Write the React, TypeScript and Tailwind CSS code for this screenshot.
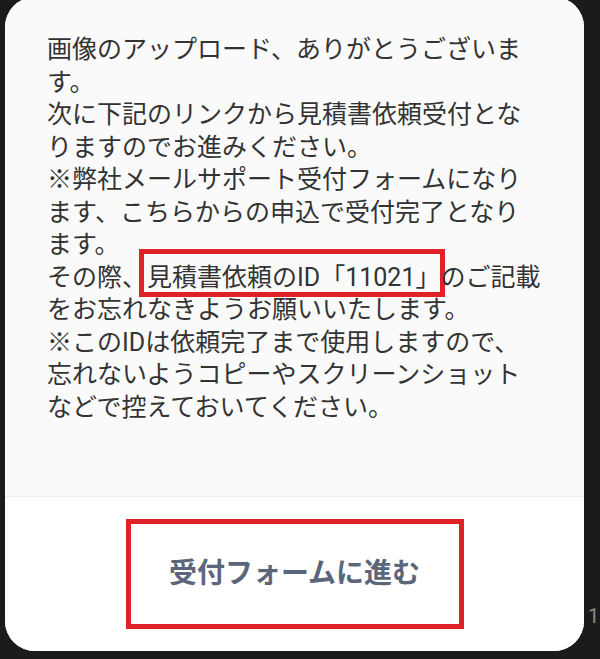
export default function App() {
  return (
    <div
      className="flex h-[659px] w-[600px] overflow-hidden bg-[#1b1b1b]"
      style={{ fontFamily: 'Roboto, "Noto Sans CJK JP", sans-serif' }}
    >
      {/* Dialog card */}
      <div className="ml-[5px] mt-[-3px] flex h-[654px] w-[579px] shrink-0 flex-col overflow-hidden rounded-[30px] bg-white">
        {/* Message */}
        <div className="h-[500px] border-b border-[#ececec] bg-[#fafafa] pl-[42px] pt-[37px]">
          <p className="w-[498px] whitespace-nowrap text-[25px] leading-[32.5px] text-[#333333]">
            画像のアップロード、ありがとうございま
            <br />
            す。
            <br />
            次に下記のリンクから見積書依頼受付とな
            <br />
            りますのでお進みください。
            <br />
            ※弊社メールサポート受付フォームになり
            <br />
            ます、こちらからの申込で受付完了となり
            <br />
            ます。
            <br />
            その際、
            <span className="ml-[-8px] mr-[-5px] border-[5px] border-[#e02128] pl-[3px] pt-[9px]">
              見積書依頼のID「11021」
            </span>
            のご記載
            <br />
            をお忘れなきようお願いいたします。
            <br />
            ※このIDは依頼完了まで使用しますので、
            <br />
            忘れないようコピーやスクリーンショット
            <br />
            などで控えておいてください。
          </p>
        </div>

        {/* Action */}
        <div className="flex flex-1 items-center justify-center bg-white">
          <button className="flex h-[110px] w-[338px] items-center justify-center border-[5px] border-[#e02128] text-[28px] font-bold text-[#5c667a]">
            受付フォームに進む
          </button>
        </div>
      </div>

      {/* Edge of the next item, cut off */}
      <div className="flex flex-1 items-end pb-[28px] pl-[4px]">
        <span className="text-[20px] text-[#8a8a8a]">1</span>
      </div>
    </div>
  );
}
